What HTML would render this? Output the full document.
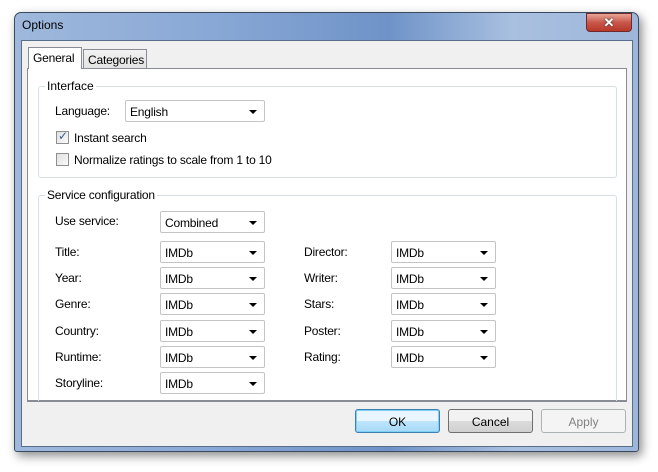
<!DOCTYPE html>
<html><head><style>
*{box-sizing:border-box;margin:0;padding:0}
body{width:658px;height:472px;background:#fff;position:relative;overflow:hidden;font-family:"Liberation Sans",sans-serif;font-size:12px;color:#000}
.a{position:absolute}
.frame{left:14px;top:12px;width:625px;height:440px;border:1px solid #3a4a60;border-radius:7px 7px 3px 3px;background:linear-gradient(90deg,#9fb8dc 0%,#8aa9d6 30%,#6f93c8 60%,#a9c0e0 80%,#9db6da 100%);box-shadow:3px 4px 10px rgba(0,0,0,.45)}
.client{left:21px;top:40px;width:612px;height:407px;background:#f0f0f0;border:1px solid #5a6d8a}
.panel{left:27px;top:68px;width:600px;height:333px;background:#fff;border:1px solid #898c95}
.tab{height:20px;border:1px solid #898c95;padding:3px 4px 0;font-size:12px;white-space:nowrap;letter-spacing:-0.2px}
.gb{border:1px solid #d5dfe5;border-radius:3px}
.gl{background:#fff;padding:0 2px}
.cb{width:105px;height:22px;border:1px solid #c4c4c4;border-radius:2px;background:#fff;padding:4px 0 0 4px;letter-spacing:-0.2px}
.cb:after{content:"";position:absolute;right:7px;top:9px;border-left:4px solid transparent;border-right:4px solid transparent;border-top:4px solid #000}
.chk{width:13px;height:13px;border:1px solid #8e8f8f;background:linear-gradient(135deg,#e0e0e0,#fafafa)}
.btn{width:85px;height:24px;border:1px solid #707070;border-radius:3px;background:linear-gradient(#f2f2f2 50%,#dcdcdc 50%,#d0d0d0);text-align:center;padding-top:5px}
.l{letter-spacing:-0.2px}
</style></head><body>
<div class="a frame"></div>
<div class="a" style="left:22px;top:18px;font-size:12px">Options</div>
<div class="a" style="left:586px;top:13px;width:46px;height:19px;border:1px solid #6d2a2a;border-radius:0 0 4px 4px;background:linear-gradient(#e8a697,#c8574a 50%,#b8382b);color:#fff;text-align:center;font-weight:bold;font-size:13px;line-height:17px;text-shadow:0 0 2px #333">✕</div>
<div class="a client"></div>
<div class="a panel"></div>
<div class="a tab" style="left:28px;top:47px;width:54px;height:22px;background:#fff;border-bottom:none">General</div>
<div class="a tab" style="left:83px;top:49px;width:64px;background:linear-gradient(#f2f2f2,#e3e3e3)">Categories</div>

<div class="a gb" style="left:38px;top:86px;width:579px;height:92px"></div>
<div class="a gl" style="left:45px;top:79px">Interface</div>
<div class="a l" style="left:55px;top:104px">Language:</div>
<div class="a cb" style="left:125px;top:100px;width:140px">English</div>
<div class="a chk" style="left:56px;top:131px"><span style="position:absolute;left:1px;top:-3px;font-size:12px;color:#3c5a9a">✓</span></div>
<div class="a l" style="left:74px;top:131px">Instant search</div>
<div class="a chk" style="left:56px;top:153px"></div>
<div class="a l" style="left:74px;top:153px">Normalize ratings to scale from 1 to 10</div>

<div class="a gb" style="left:38px;top:195px;width:579px;height:215px;border-bottom:none"></div>
<div class="a" style="left:27px;top:401px;width:600px;height:10px;background:#f0f0f0;border-top:1px solid #898c95"></div>
<div class="a gl l" style="left:45px;top:188px">Service configuration</div>
<div class="a l" style="left:55px;top:214px">Use service:</div>
<div class="a cb" style="left:160px;top:211px">Combined</div>

<div class="a l" style="left:55px;top:245px">Title:</div><div class="a cb" style="left:160px;top:241px">IMDb</div>
<div class="a l" style="left:55px;top:271px">Year:</div><div class="a cb" style="left:160px;top:267px">IMDb</div>
<div class="a l" style="left:55px;top:297px">Genre:</div><div class="a cb" style="left:160px;top:293px">IMDb</div>
<div class="a l" style="left:55px;top:324px">Country:</div><div class="a cb" style="left:160px;top:320px">IMDb</div>
<div class="a l" style="left:55px;top:350px">Runtime:</div><div class="a cb" style="left:160px;top:346px">IMDb</div>
<div class="a l" style="left:55px;top:376px">Storyline:</div><div class="a cb" style="left:160px;top:372px">IMDb</div>

<div class="a l" style="left:304px;top:245px">Director:</div><div class="a cb" style="left:391px;top:241px">IMDb</div>
<div class="a l" style="left:304px;top:271px">Writer:</div><div class="a cb" style="left:391px;top:267px">IMDb</div>
<div class="a l" style="left:304px;top:297px">Stars:</div><div class="a cb" style="left:391px;top:293px">IMDb</div>
<div class="a l" style="left:304px;top:324px">Poster:</div><div class="a cb" style="left:391px;top:320px">IMDb</div>
<div class="a l" style="left:304px;top:350px">Rating:</div><div class="a cb" style="left:391px;top:346px">IMDb</div>

<div class="a btn" style="left:355px;top:409px;border-color:#3c7fb1;background:linear-gradient(#eaf6fd 50%,#bee6fd 50%,#a7d9f5);box-shadow:inset 0 0 0 1px #7fd0f5">OK</div>
<div class="a btn" style="left:448px;top:409px">Cancel</div>
<div class="a btn" style="left:541px;top:409px;border-color:#adb2b5;background:#f4f4f4;color:#838383">Apply</div>
</body></html>
